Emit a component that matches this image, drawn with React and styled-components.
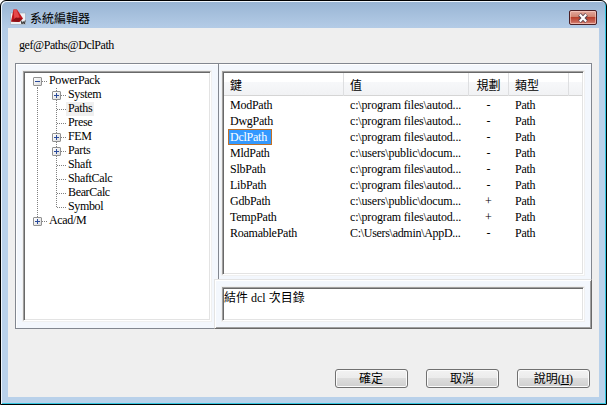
import React from 'react';
import styled, { createGlobalStyle, css } from 'styled-components';

const GlobalStyle = createGlobalStyle`
  * {
    box-sizing: border-box;
  }

  body {
    margin: 0;
    overflow: hidden;
    background: #ffffff;
  }
`;

const Window = styled.div`
  width: 607px;
  height: 405px;
  display: flex;
  flex-direction: column;
  padding: 1px 6px 7px 6px;
  border: 1px solid #000000;
  border-radius: 6px 6px 0 0;
  background: linear-gradient(#98b4d3, #b3cbe6 26px, #b9d1ea 60px);
  box-shadow: inset 1px 1px 0 #eef5fc, inset -1px -1px 0 #35c6e0;
  font-family: 'Liberation Serif', 'Noto Sans CJK TC', serif;
  font-size: 12px;
  color: #000000;
`;

const TitleBar = styled.div`
  height: 26px;
  flex: none;
  display: flex;
  align-items: flex-start;
  padding: 7px 3px 0 3px;
`;

const Title = styled.div`
  flex: 1;
  margin-left: 3px;
  line-height: 18px;
  font-family: 'Noto Sans CJK TC', sans-serif;
`;

const CloseButton = styled.button`
  width: 28px;
  height: 15px;
  margin-top: 1px;
  padding: 0;
  display: flex;
  align-items: center;
  justify-content: center;
  border: 1px solid #4b1f24;
  border-radius: 2px;
  background: linear-gradient(#e3aa9f, #d0836f 45%, #b8402c 50%, #c9685a 85%, #dc9589);
  box-shadow: inset 0 0 0 1px rgba(255, 215, 205, 0.55);
`;

const Client = styled.div`
  flex: 1;
  min-height: 0;
  margin: 0 0 0 1px;
  width: 591px;
  display: flex;
  flex-direction: column;
  padding: 7px;
  background: #efefef;
`;

const CurrentPath = styled.div`
  height: 28px;
  flex: none;
  padding: 2px 4px;
  line-height: 16px;
  letter-spacing: -0.42px;
`;

const Frame = styled.div`
  width: 577px;
  height: 266px;
  flex: none;
  display: flex;
  border: 1px solid #828790;
  background: #f3f7fd;
  box-shadow: inset 1px 1px 0 #ffffff;
`;

const sunken = css`
  border: 1px solid;
  border-color: #a0a0a0 #ffffff #ffffff #a0a0a0;
  background: #ffffff;
  box-shadow: inset 1px 1px 0 #696969, inset -1px -1px 0 #e3e3e3, 0 0 0 1px #f0f0f0;
`;

const Tree = styled.div`
  ${sunken}
  width: 188px;
  height: 250px;
  margin: 7px 3px 0 7px;
  padding: 2px 4px;
`;

const TreeRow = styled.div`
  display: flex;
  align-items: center;
  height: 14px;
`;

const dotsDown = 'repeating-linear-gradient(#808080 0 1px, transparent 1px 2px)';
const dotsAcross = 'repeating-linear-gradient(90deg, #808080 0 1px, transparent 1px 2px)';

const lineHeights = { full: '14px', top: '8px', bottom: '7px' };

const Branch = styled.div`
  width: 19px;
  height: 14px;
  flex: none;
  display: flex;
  align-items: center;
  padding: 1px 0 0 5px;
  background-image: ${dotsDown}, ${dotsAcross};
  background-repeat: no-repeat;
  background-size: 1px ${(props) => lineHeights[props.$down]}, ${(props) => (props.$across ? '9px' : '0')} 1px;
  background-position: 9px ${(props) => (props.$down === 'bottom' ? '7px' : '0')}, 10px 7px;
`;

const Expander = styled.span`
  width: 9px;
  height: 9px;
  display: block;
  border: 1px solid #919191;
  border-radius: 1px;
  background:
    linear-gradient(#2b4b9b, #2b4b9b) center / 5px 1px no-repeat,
    linear-gradient(#2b4b9b, #2b4b9b) center / 1px ${(props) => (props.$open ? '0' : '5px')} no-repeat,
    linear-gradient(135deg, #ffffff, #dcdcdc);
`;

const TreeLabel = styled.span`
  height: 14px;
  padding: 0 2px;
  line-height: 12px;
  letter-spacing: -0.35px;
  background: ${(props) => (props.$current ? '#f0f0f0' : 'transparent')};
`;

const Right = styled.div`
  flex: 1;
  min-width: 0;
  display: flex;
  flex-direction: column;
`;

const ListPane = styled.div`
  height: 215px;
  flex: none;
  margin-left: 4px;
  padding: 7px 7px 0 3px;
  border-left: 1px solid #828790;
`;

const List = styled.div`
  ${sunken}
  height: 204px;
  padding: 1px;
`;

const columns = '120px 125px 40px 60px 1fr';

const Header = styled.div`
  display: grid;
  grid-template-columns: ${columns};
  height: 23px;
  border-bottom: 1px solid #d5d5d5;
  background: linear-gradient(#ffffff 0 9px, #f7f8fa 9px, #f1f2f4);
`;

const HeaderCell = styled.div`
  padding: 1px 6px 0;
  line-height: 22px;
  font-family: 'Noto Sans CJK TC', sans-serif;
  border-right: ${(props) => (props.$last ? 'none' : '1px solid #dedfe1')};
  text-align: ${(props) => (props.$center ? 'center' : 'left')};
`;

const Rows = styled.div`
  padding-top: 1px;
`;

const Row = styled.div`
  display: grid;
  grid-template-columns: ${columns};
  height: 16px;
`;

const Cell = styled.div`
  height: 16px;
  padding-left: 6px;
  line-height: 16px;
  white-space: nowrap;
  letter-spacing: ${(props) => props.$spacing || '-0.25px'};
`;

const FlagCell = styled(Cell)`
  padding: 0 1px 0 0;
  text-align: center;
  letter-spacing: 0;
`;

const Selection = styled.span`
  display: block;
  width: 44px;
  height: 16px;
  margin-left: -2px;
  padding-left: 1px;
  line-height: 14px;
  border: 1px solid #c07028;
  background: #3399ff;
  color: #ffffff;
`;

const Description = styled.div`
  flex: 1;
  min-height: 0;
  margin: 0 -1px -1px 0;
  padding: 7px 7px 6px;
  border: 1px solid;
  border-color: #e3e3e3 #696969 #696969 #e3e3e3;
  background: #f3f7fd;
  box-shadow: inset 1px 1px 0 #ffffff, inset -1px -1px 0 #a0a0a0;
`;

const DescriptionField = styled.div`
  ${sunken}
  height: 34px;
  padding: 1px 1px;
  line-height: 18px;
  white-space: nowrap;
`;

const Buttons = styled.div`
  display: flex;
  justify-content: flex-end;
  gap: 18px;
  padding: 40px 2px 0 0;
`;

const Button = styled.button`
  width: 73px;
  height: 19px;
  padding: 0 1px 0 0;
  border: 1px solid #707070;
  border-radius: 3px;
  background: linear-gradient(#f2f2f2, #ebebeb 50%, #dddddd 50%, #cfcfcf);
  box-shadow: inset 0 0 0 1px #fcfcfc;
  font: 12px/16px 'Liberation Serif', 'Noto Sans CJK TC', serif;
  color: #000000;
`;

const Mnemonic = styled.span`
  letter-spacing: -0.8px;
`;

// lines: one entry per indent column, the last one belongs to the item itself
const treeItems = [
  { label: 'PowerPack', open: true, lines: ['bottom'] },
  { label: 'System', open: false, lines: ['full', 'full'] },
  { label: 'Paths', current: true, lines: ['full', 'full'] },
  { label: 'Prese', lines: ['full', 'full'] },
  { label: 'FEM', open: false, lines: ['full', 'full'] },
  { label: 'Parts', open: false, lines: ['full', 'full'] },
  { label: 'Shaft', lines: ['full', 'full'] },
  { label: 'ShaftCalc', lines: ['full', 'full'] },
  { label: 'BearCalc', lines: ['full', 'full'] },
  { label: 'Symbol', lines: ['full', 'top'] },
  { label: 'Acad/M', open: false, lines: ['top'] },
];

const program = 'c:\\program files\\autod...';
const users = 'c:\\users\\public\\docum...';

const entries = [
  { key: 'ModPath', value: program, flag: '-' },
  { key: 'DwgPath', value: program, flag: '-' },
  { key: 'DclPath', value: program, flag: '-', selected: true },
  { key: 'MldPath', value: users, flag: '-' },
  { key: 'SlbPath', value: program, flag: '-' },
  { key: 'LibPath', value: program, flag: '-' },
  { key: 'GdbPath', value: users, flag: '+' },
  { key: 'TempPath', value: program, flag: '+' },
  { key: 'RoamablePath', value: 'C:\\Users\\admin\\AppD...', flag: '-', spacing: '-0.3px' },
];

function AppIcon() {
  return (
    <svg width="17" height="17" viewBox="0 0 17 17">
      <path d="M.5 4h15v11.500H.5z" fill="#eef1f4" stroke="#9aa6b4" strokeWidth="0.600" />
      <path d="M1 12.500L3.500.5h3.500l6 9-3.500 3.500z" fill="#c3161c" />
      <path d="M3.500.5h3l3 7.500-5 3z" fill="#e5484a" />
      <path d="M1 12.500l5-4 6.500 1-4 3.500z" fill="#8d0f15" />
      <path d="M11 11.500l1 3.500 1.200-2.500 1 2.500 1-3.500" fill="none" stroke="#222222" strokeWidth="0.900" />
    </svg>
  );
}

function CloseIcon() {
  return (
    <svg width="12" height="10" viewBox="0 0 12 10">
      <path d="M2.500 1.500l7 7M9.500 1.500l-7 7" stroke="#5a4450" strokeWidth="4" />
      <path d="M2.800 1.500l6.400 7M9.200 1.500l-6.400 7" stroke="#ffffff" strokeWidth="2.200" />
    </svg>
  );
}

function TreeItem({ item }) {
  const last = item.lines.length - 1;
  return (
    <TreeRow>
      {item.lines.map((down, i) => (
        <Branch key={i} $down={down} $across={i === last}>
          {i === last && item.open !== undefined && <Expander $open={item.open} />}
        </Branch>
      ))}
      <TreeLabel $current={item.current}>{item.label}</TreeLabel>
    </TreeRow>
  );
}

function App() {
  return (
    <>
      <GlobalStyle />
      <Window>
        <TitleBar>
          <AppIcon />
          <Title>系統編輯器</Title>
          <CloseButton aria-label="Close">
            <CloseIcon />
          </CloseButton>
        </TitleBar>
        <Client>
          <CurrentPath>gef@Paths@DclPath</CurrentPath>
          <Frame>
            <Tree>
              {treeItems.map((item) => (
                <TreeItem key={item.label} item={item} />
              ))}
            </Tree>
            <Right>
              <ListPane>
                <List>
                  <Header>
                    <HeaderCell>鍵</HeaderCell>
                    <HeaderCell>值</HeaderCell>
                    <HeaderCell $center>規劃</HeaderCell>
                    <HeaderCell>類型</HeaderCell>
                    <HeaderCell $last />
                  </Header>
                  <Rows>
                    {entries.map((entry) => (
                      <Row key={entry.key}>
                        <Cell>{entry.selected ? <Selection>{entry.key}</Selection> : entry.key}</Cell>
                        <Cell $spacing={entry.spacing || '-0.17px'}>{entry.value}</Cell>
                        <FlagCell>{entry.flag}</FlagCell>
                        <Cell>Path</Cell>
                      </Row>
                    ))}
                  </Rows>
                </List>
              </ListPane>
              <Description>
                <DescriptionField>結件 dcl 次目錄</DescriptionField>
              </Description>
            </Right>
          </Frame>
          <Buttons>
            <Button>確定</Button>
            <Button>取消</Button>
            <Button>
              說明
              <Mnemonic>
                (<u>H</u>)
              </Mnemonic>
            </Button>
          </Buttons>
        </Client>
      </Window>
    </>
  );
}

export default App;
